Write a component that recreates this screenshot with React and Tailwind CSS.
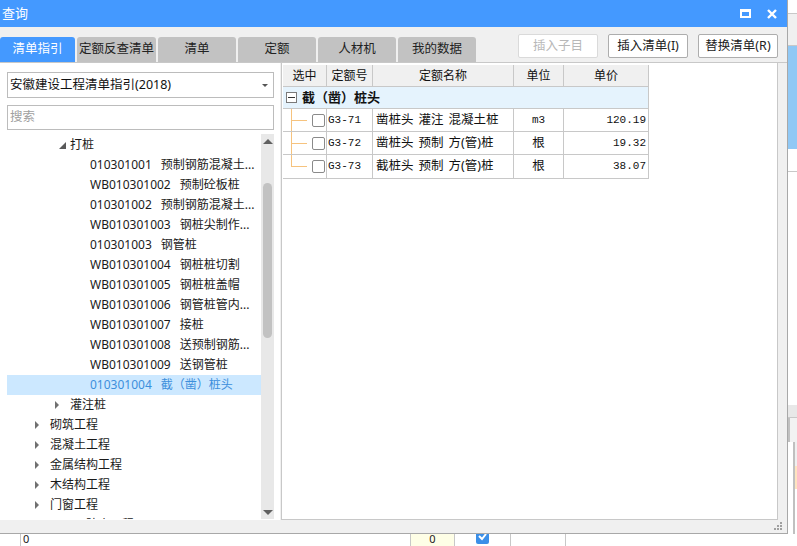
import { Fragment } from "react";

const UI = { fontFamily: '"Noto Sans", "Noto Sans CJK SC", sans-serif' };
const MONO = { fontFamily: '"Liberation Mono", "Noto Sans CJK SC", monospace' };

const tabs = ["清单指引", "定额反查清单", "清单", "定额", "人材机", "我的数据"];

const pileItems = [
  ["010301001", "预制钢筋混凝土..."],
  ["WB010301002", "预制砼板桩"],
  ["010301002", "预制钢筋混凝土..."],
  ["WB010301003", "钢桩尖制作..."],
  ["010301003", "钢管桩"],
  ["WB010301004", "钢桩桩切割"],
  ["WB010301005", "钢桩桩盖帽"],
  ["WB010301006", "钢管桩管内..."],
  ["WB010301007", "接桩"],
  ["WB010301008", "送预制钢筋..."],
  ["WB010301009", "送钢管桩"],
];

const sections = ["砌筑工程", "混凝土工程", "金属结构工程", "木结构工程", "门窗工程", "屋面及防水工程"];

const rows = [
  { code: "G3-71", name: ["凿桩头", "灌注", "混凝土桩"], unit: "m3", price: "120.19", last: false },
  { code: "G3-72", name: ["凿桩头", "预制", "方(管)桩"], unit: "根", price: "19.32", last: false },
  { code: "G3-73", name: ["截桩头", "预制", "方(管)桩"], unit: "根", price: "38.07", last: true },
];

const Closed = () => (
  <span className="inline-block h-0 w-0 border-y-[4px] border-l-[4px] border-y-transparent border-l-[#707070]" />
);

const Open = () => (
  <svg width="7" height="7" viewBox="0 0 7 7">
    <path d="M7 0 L7 7 L0 7 Z" fill="#595959" />
  </svg>
);

function Tree() {
  return (
    <div className="flex min-h-0 flex-1 text-[12px] text-[#1a1a1a]">
      <div className="min-w-0 flex-1 overflow-hidden pt-px">
        <div className="flex h-5 items-center">
          <span className="ml-[49px] flex w-[14px] justify-center pr-[2px]"><Open /></span>
          <span>打桩</span>
        </div>
        {pileItems.map(([code, name]) => (
          <div key={code} className="flex h-5 items-center whitespace-nowrap pl-[83px]">
            <span>{code}</span>
            <span className="ml-[9px]">{name}</span>
          </div>
        ))}
        <div className="flex h-5 items-center whitespace-nowrap bg-[#cce8ff] pl-[83px] text-[#3c8fdc]">
          <span>010301004</span>
          <span className="ml-[9px]">截（凿）桩头</span>
        </div>
        <div className="flex h-5 items-center">
          <span className="ml-[48px] flex w-[15px]"><Closed /></span>
          <span>灌注桩</span>
        </div>
        {sections.map((s) => (
          <div key={s} className="flex h-5 items-center">
            <span className="ml-[28px] flex w-[15px]"><Closed /></span>
            <span>{s}</span>
          </div>
        ))}
      </div>
      <div className="flex w-[13px] flex-col items-center bg-[#e8e8e8]">
        <span className="mt-[5px] h-0 w-0 border-x-[5px] border-b-[5px] border-x-transparent border-b-[#606060]" />
        <div className="mt-[39px] h-[155px] w-[9px] rounded-[5px] bg-[#c2c2c2]" />
        <div className="flex-1" />
        <span className="mb-[4px] h-0 w-0 border-x-[5px] border-t-[5px] border-x-transparent border-t-[#606060]" />
      </div>
    </div>
  );
}

function Grid() {
  const cols = "grid-cols-[44px_46px_141px_50px_84px]";
  return (
    <div className="w-[366px] border-r border-b border-[#c8c8c8] text-[12px] text-[#111]">
      <div className={`grid ${cols} h-[22px] bg-[#f0f0f0] text-center leading-[21px]`}>
        {["选中", "定额号", "定额名称", "单位", "单价"].map((h) => (
          <div key={h} className="border-r border-b border-[#c8c8c8] last:border-r-0">{h}</div>
        ))}
      </div>
      <div className="flex h-[22px] items-center border-b border-[#c8c8c8] bg-[#e5f3fd] text-[13px] font-bold">
        <span className="ml-[3px] flex h-[11px] w-[11px] items-center justify-center border border-[#7a7a7a] bg-white">
          <span className="h-px w-[7px] bg-[#333]" />
        </span>
        <span className="ml-[5px]">截（凿）桩头</span>
      </div>
      {rows.map((r) => (
        <div key={r.code} className={`grid ${cols} h-[23px] border-b border-[#c8c8c8] last:border-b-0`}>
          <div className="relative flex items-center border-r border-[#c8c8c8]">
            <span className={`absolute left-[8px] top-0 w-px bg-[#f6c37e] ${r.last ? "h-[12px]" : "h-full"}`} />
            <span className="ml-[8px] h-px w-[16px] bg-[#f6c37e]" />
            <span className="ml-[5px] h-[13px] w-[13px] rounded-[2px] border border-[#8a8a8a] bg-white" />
          </div>
          <div className="flex items-center border-r border-[#c8c8c8] pl-[1px] text-[11px]" style={MONO}>{r.code}</div>
          <div className="flex items-center gap-[5px] whitespace-nowrap border-r border-[#c8c8c8] pl-[3px] text-[12.5px]">
            {r.name.map((p) => (
              <span key={p}>{p}</span>
            ))}
          </div>
          <div className="flex items-center justify-center border-r border-[#c8c8c8] text-[12.5px]">
            <span className={r.unit === "m3" ? "text-[11px]" : ""} style={r.unit === "m3" ? MONO : undefined}>{r.unit}</span>
          </div>
          <div className="flex items-center justify-end pr-[2px] text-[11px]" style={MONO}>{r.price}</div>
        </div>
      ))}
    </div>
  );
}

function Dialog() {
  return (
    <div className="flex h-[534px] w-[788px] flex-col border-r border-b border-[#a8a8a8] bg-[#f0f0f0]">
      {/* title bar */}
      <div className="flex h-[27px] items-center bg-[#4499ff] text-white">
        <span className="ml-[2px] text-[13px]">查询</span>
        <div className="flex-1" />
        <span className="mr-[16px] h-[9px] w-[11px] border-2 border-t-[3px] border-white" />
        <svg width="10" height="10" viewBox="0 0 10 10" className="mr-[10px]">
          <path d="M1 1 L9 9 M9 1 L1 9" stroke="white" strokeWidth="2.4" />
        </svg>
      </div>

      {/* tabs + buttons */}
      <div className="flex h-[35px] items-end">
        <div className="flex gap-[2px]">
          {tabs.map((t, i) => (
            <div
              key={t}
              className={`flex h-[25px] items-center justify-center rounded-t-[3px] text-[12.5px] ${
                i === 0 ? "w-[75px] bg-[#4499ff] text-white" : "w-[78px] bg-[#c2c2c2] text-[#222]"
              } ${i === 1 ? "w-[79px]" : ""}`}
            >
              {t}
            </div>
          ))}
        </div>
        <div className="mb-[4px] ml-[42px] flex gap-[10px] text-[12.5px]">
          <div className="flex h-[24px] w-[80px] items-center justify-center rounded-[2px] border border-[#dadada] bg-white text-[#b8b8b8]">插入子目</div>
          <div className="flex h-[24px] w-[80px] items-center justify-center rounded-[2px] border border-[#adadad] bg-white text-[#222]">插入清单(I)</div>
          <div className="flex h-[24px] w-[80px] items-center justify-center rounded-[2px] border border-[#adadad] bg-white text-[#222]">替换清单(R)</div>
        </div>
      </div>

      {/* body */}
      <div className="flex min-h-0 flex-1 border-t border-[#c8c8c8]">
        <div className="flex w-[280px] flex-col bg-white pb-[1px] pl-[7px] pr-[6px] pt-[9px]">
          <div className="flex h-[26px] items-center border border-[#bcbcbc] pl-[2px] text-[12.5px] text-[#111]">
            <span className="flex-1">安徽建设工程清单指引(2018)</span>
            <span className="mr-[5px] h-0 w-0 border-x-[3px] border-t-[3px] border-x-transparent border-t-[#555]" />
          </div>
          <div className="mt-[7px] flex h-[25px] items-center border border-[#bcbcbc] pl-[2px] text-[12.5px] text-[#a0a0a0]">搜索</div>
          <div className="mt-[4px] flex min-h-0 flex-1 flex-col">
            <Tree />
          </div>
        </div>
        <div className="ml-px mr-[9px] flex min-w-0 flex-1 flex-col border-x border-b border-[#c8c8c8] bg-white pl-px pt-[2px]">
          <Grid />
        </div>
      </div>
      <div className="relative h-[13px]">
        <svg width="9" height="9" viewBox="0 0 9 9" className="absolute right-[4px] top-[2px]">
          <rect x="6" y="0" width="2" height="2" fill="#a0a0a0" />
          <rect x="3" y="3" width="2" height="2" fill="#a0a0a0" />
          <rect x="6" y="3" width="2" height="2" fill="#a0a0a0" />
          <rect x="0" y="6" width="2" height="2" fill="#a0a0a0" />
          <rect x="3" y="6" width="2" height="2" fill="#a0a0a0" />
          <rect x="6" y="6" width="2" height="2" fill="#a0a0a0" />
        </svg>
      </div>
    </div>
  );
}

export default function App() {
  return (
    <div className="h-[546px] w-[797px] overflow-hidden bg-white" style={UI}>
      <div className="flex">
        <Dialog />
        {/* background app peeking at the right */}
        <div className="flex w-[9px] flex-col">
          <div className="h-[13px] bg-white" />
          <div className="h-[33px] border-y border-[#c8c8c8] bg-[#f0f0f0]" />
          <div className="h-[103px] bg-[#90c8f5]" />
          <div className="h-[23px] border-b border-[#c8c8c8] bg-white" />
          <div className="h-[233px] bg-white" />
          <div className="h-[13px] border-b border-[#c8c8c8] bg-[#e8e8e8]" />
          <div className="h-[24px] border-l-2 border-[#c0c0c0] bg-[#f2f2f2]" />
          <div className="ml-[5px] h-[24px] border-l-2 border-[#c0c0c0] bg-[#f0f0f0]" />
          <div className="ml-[5px] h-[23px] border-l-2 border-[#c0c0c0] bg-[#ffe4c0]" />
          <div className="ml-[5px] flex-1 border-l-2 border-[#c0c0c0]" />
        </div>
      </div>
      {/* background app row below */}
      <div className="flex h-[12px] text-[11px] leading-[10px] text-[#222]">
        <div className="w-[20px]" />
        <div className="w-[390px] border-l border-[#c8c8c8] pl-[2px]">0</div>
        <div className="w-[44px] border-l border-[#c8c8c8] bg-[#fefee6] text-center">0</div>
        <div className="flex w-[56px] justify-center border-l border-[#c8c8c8]">
          <span className="flex h-[10px] w-[13px] items-start justify-center rounded-b-[2px] bg-[#3b8fe8]">
            <svg width="9" height="7" viewBox="0 0 9 7"><path d="M1 2 L4 5 L8 0" stroke="white" strokeWidth="2" fill="none" /></svg>
          </span>
        </div>
        <div className="w-[56px] border-x border-[#c8c8c8]" />
      </div>
    </div>
  );
}
